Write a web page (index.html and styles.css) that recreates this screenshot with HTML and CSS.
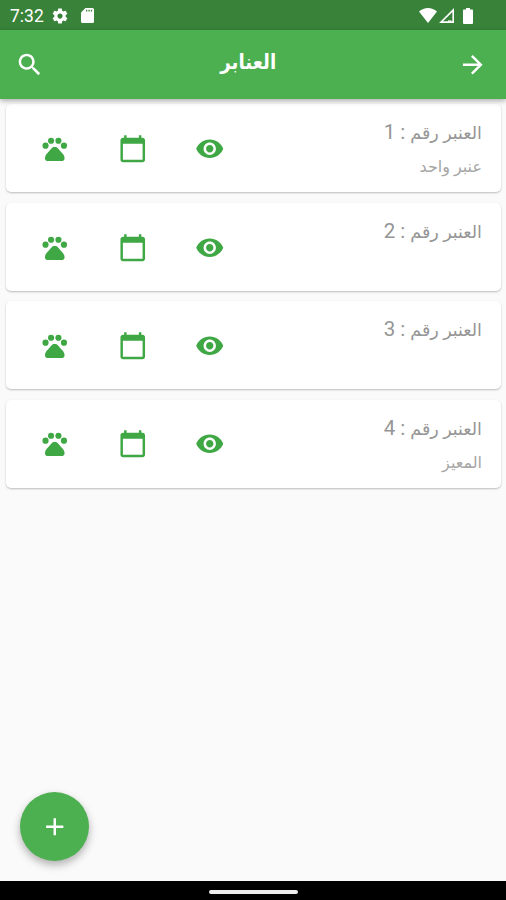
FILE: index.html
```html
<!DOCTYPE html>
<html lang="ar" dir="rtl">
<head>
  <meta charset="UTF-8">
  <meta name="viewport" content="width=device-width, initial-scale=1.0">
  <title>العنابر</title>
  <link rel="stylesheet" href="styles.css">
</head>
<body>
  <svg class="sprite" width="0" height="0">
    <symbol id="eye" viewBox="0 0 24 24"><path d="M12 4.5C7 4.5 2.73 7.61 1 12c1.73 4.39 6 7.5 11 7.5s9.27-3.11 11-7.5c-1.73-4.39-6-7.5-11-7.5zM12 17c-2.76 0-5-2.24-5-5s2.24-5 5-5 5 2.24 5 5-2.24 5-5 5zm0-8c-1.66 0-3 1.34-3 3s1.34 3 3 3 3-1.34 3-3-1.34-3-3-3z"/></symbol>
    <symbol id="calendar" viewBox="0 0 24 24"><path d="M20 3h-1V1h-2v2H7V1H5v2H4c-1.1 0-2 .9-2 2v16c0 1.1.9 2 2 2h16c1.1 0 2-.9 2-2V5c0-1.1-.9-2-2-2zm0 18H4V8h16v13z"/></symbol>
    <symbol id="paw" viewBox="0 0 24 24"><circle cx="4.5" cy="9.5" r="2.5"/><circle cx="9" cy="5.5" r="2.5"/><circle cx="15" cy="5.5" r="2.5"/><circle cx="19.5" cy="9.5" r="2.5"/><path d="M17.34 14.86c-.87-1.02-1.6-1.89-2.48-2.91-.46-.54-1.05-1.08-1.75-1.32-.11-.04-.22-.07-.33-.09-.25-.04-.52-.04-.78-.04s-.53 0-.79.05c-.11.02-.22.05-.33.09-.7.24-1.28.78-1.75 1.32-.87 1.02-1.6 1.89-2.48 2.91-1.31 1.31-2.62 2.76-2.62 4.79 0 1.4 1 2.33 2.33 2.33H17.7c1.3 0 2.3-.93 2.3-2.33 0-2.04-1.35-3.49-2.66-4.8z"/></symbol>
  </svg>

  <div class="status-bar" dir="ltr">
    <span class="time">7:32</span>
    <svg class="gear" viewBox="0 0 24 24"><path d="M19.43 12.98c.04-.32.07-.64.07-.98s-.03-.66-.07-.98l2.11-1.65c.19-.15.24-.42.12-.64l-2-3.46c-.12-.22-.39-.3-.61-.22l-2.49 1c-.52-.4-1.08-.73-1.69-.98l-.38-2.65C14.46 2.18 14.25 2 14 2h-4c-.25 0-.46.18-.49.42l-.38 2.65c-.61.25-1.17.59-1.69.98l-2.49-1c-.23-.09-.49 0-.61.22l-2 3.46c-.13.22-.07.49.12.64l2.11 1.65c-.04.32-.07.65-.07.98s.03.66.07.98l-2.11 1.65c-.19.15-.24.42-.12.64l2 3.46c.12.22.39.3.61.22l2.49-1c.52.4 1.08.73 1.69.98l.38 2.65c.03.24.24.42.49.42h4c.25 0 .46-.18.49-.42l.38-2.65c.61-.25 1.17-.59 1.69-.98l2.49 1c.23.09.49 0 .61-.22l2-3.46c.12-.22.07-.49-.12-.64l-2.11-1.65zM12 15.5c-1.93 0-3.5-1.57-3.5-3.5s1.57-3.5 3.5-3.5 3.5 1.57 3.5 3.5-1.57 3.5-3.5 3.5z"/></svg>
    <svg class="sd" viewBox="0 0 13 15"><path d="M4.5 0H11.5Q13 0 13 1.5V13.5Q13 15 11.5 15H1.5Q0 15 0 13.5V4.5z"/><path class="slots" d="M5 1.8h1.3v1.6H5zM7.4 1.8h1.3v1.6H7.4zM9.8 1.8h1.3v1.6H9.8z"/></svg>
    <svg class="wifi" viewBox="0 0 18 15"><path d="M9 15L0 3.6Q4 0 9 0t9 3.6z"/></svg>
    <svg class="signal" viewBox="0 0 15 15"><path fill-rule="evenodd" d="M15 0V15H0zM13.4 4L4 13.2H13.4z"/><path d="M9 12.4h3.4v1.4H9z"/></svg>
    <svg class="battery" viewBox="0 0 10 16"><path d="M3 0h4v1.6h2q1 0 1 1V15q0 1-1 1H1q-1 0-1-1V2.6q0-1 1-1h2z"/></svg>
  </div>

  <header class="app-bar">
    <svg class="icon" viewBox="0 0 24 24"><path d="M12 4l-1.41 1.41L16.17 11H4v2h12.17l-5.58 5.59L12 20l8-8z"/></svg>
    <h1 class="title">العنابر</h1>
    <svg class="icon" viewBox="0 0 24 24"><path d="M15.5 14h-.79l-.28-.27C15.41 12.59 16 11.11 16 9.5 16 5.91 13.09 3 9.5 3S3 5.91 3 9.5 5.91 16 9.5 16c1.61 0 3.09-.59 4.23-1.57l.27.28v.79l5 4.99L20.49 19l-4.99-5zm-6 0C7.01 14 5 11.99 5 9.5S7.01 5 9.5 5 14 7.01 14 9.5 11.99 14 9.5 14z"/></svg>
  </header>

  <main class="list">
    <div class="card">
      <div class="info">
        <div class="name">العنبر رقم<span class="number"> : 1</span></div>
        <div class="note">عنبر واحد</div>
      </div>
      <div class="actions">
        <svg class="icon"><use href="#eye"/></svg>
        <svg class="icon"><use href="#calendar"/></svg>
        <svg class="icon"><use href="#paw"/></svg>
      </div>
    </div>
    <div class="card">
      <div class="info">
        <div class="name">العنبر رقم<span class="number"> : 2</span></div>
      </div>
      <div class="actions">
        <svg class="icon"><use href="#eye"/></svg>
        <svg class="icon"><use href="#calendar"/></svg>
        <svg class="icon"><use href="#paw"/></svg>
      </div>
    </div>
    <div class="card">
      <div class="info">
        <div class="name">العنبر رقم<span class="number"> : 3</span></div>
      </div>
      <div class="actions">
        <svg class="icon"><use href="#eye"/></svg>
        <svg class="icon"><use href="#calendar"/></svg>
        <svg class="icon"><use href="#paw"/></svg>
      </div>
    </div>
    <div class="card">
      <div class="info">
        <div class="name">العنبر رقم<span class="number"> : 4</span></div>
        <div class="note">المعيز</div>
      </div>
      <div class="actions">
        <svg class="icon"><use href="#eye"/></svg>
        <svg class="icon"><use href="#calendar"/></svg>
        <svg class="icon"><use href="#paw"/></svg>
      </div>
    </div>
  </main>

  <button class="fab">
    <svg class="icon" viewBox="0 0 24 24"><path d="M19 13h-6v6h-2v-6H5v-2h6V5h2v6h6v2z"/></svg>
  </button>

  <div class="nav-bar"><div class="handle"></div></div>
</body>
</html>
```
FILE: styles.css
```css
* {
  box-sizing: border-box;
}
body {
  margin: 0;
  height: 900px;
  display: flex;
  flex-direction: column;
  overflow: hidden;
  background: #fafafa;
  font-family: Roboto, "DejaVu Sans", sans-serif;
}
.sprite {
  position: absolute;
}
.icon {
  width: 29.5px;
  height: 29.5px;
  fill: currentColor;
  flex: none;
}
.status-bar {
  height: 30px;
  display: flex;
  align-items: center;
  padding: 1px 33px 0 10px;
  background: #388239;
  color: #fff;
  fill: #fff;
}
.time {
  width: 41px;
  font-size: 17.5px;
}
.gear {
  width: 18px;
  height: 18px;
}
.sd {
  width: 13px;
  height: 15px;
  margin-left: 12px;
}
.slots {
  fill: #388239;
}
.wifi {
  width: 18px;
  height: 15px;
  margin-left: auto;
}
.signal {
  width: 15px;
  height: 15px;
  margin-left: 2px;
}
.battery {
  width: 10px;
  height: 16px;
  margin-left: 9px;
}
.app-bar {
  height: 69px;
  display: flex;
  align-items: center;
  justify-content: space-between;
  padding: 0 19px 0 15px;
  background: #4caf50;
  color: #fff;
  box-shadow: 0 2px 5px rgba(0,0,0,0.3);
  z-index: 1;
}
.title {
  margin: 0 5px 6px 0;
  font-size: 21px;
  line-height: 30px;
  font-weight: bold;
  transform: scaleX(0.87);
}
.list {
  flex: 1;
  display: flex;
  flex-direction: column;
  gap: 10.4px;
  padding: 5.4px 5px 0 6px;
}
.card {
  height: 88px;
  display: flex;
  justify-content: space-between;
  padding: 0 19px 0 34px;
  background: #fff;
  border-radius: 5px;
  box-shadow: 0 1px 2px rgba(0,0,0,0.25);
}
.info {
  padding-top: 14px;
  white-space: nowrap;
}
.name {
  font-size: 17.5px;
  line-height: 28px;
  color: #959595;
}
.number {
  font-size: 20.5px;
}
.note {
  margin-top: 7px;
  font-size: 16px;
  line-height: 26px;
  color: #a6a6a6;
}
.actions {
  display: flex;
  align-items: center;
  gap: 48px;
  padding-top: 1px;
  color: #3fa744;
}
.fab {
  position: absolute;
  left: 20px;
  top: 792px;
  width: 69px;
  height: 69px;
  display: flex;
  align-items: center;
  justify-content: center;
  padding: 0;
  border: 0;
  border-radius: 50%;
  background: #4caf50;
  color: #fff;
  box-shadow: 0 4px 8px rgba(0,0,0,0.3);
}
.nav-bar {
  height: 19px;
  display: flex;
  align-items: center;
  justify-content: center;
  background: #000;
}
.handle {
  width: 89px;
  height: 4px;
  margin-top: 2px;
  border-radius: 2px;
  background: #eee;
}
```
